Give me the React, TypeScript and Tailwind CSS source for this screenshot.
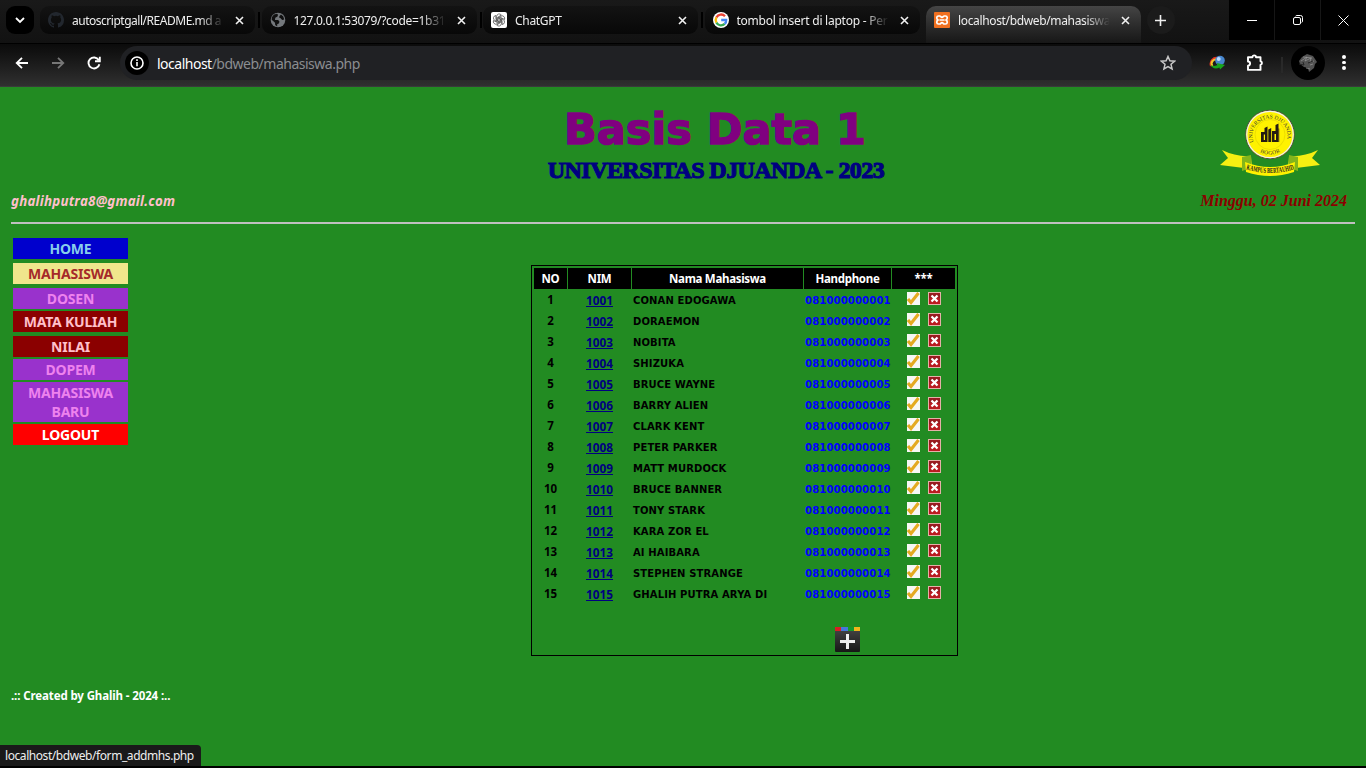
import React from "react";

const students = [
  "CONAN EDOGAWA", "DORAEMON", "NOBITA", "SHIZUKA", "BRUCE WAYNE", "BARRY ALIEN", "CLARK KENT", "PETER PARKER",
  "MATT MURDOCK", "BRUCE BANNER", "TONY STARK", "KARA ZOR EL", "AI HAIBARA", "STEPHEN STRANGE", "GHALIH PUTRA ARYA DI",
];

const menu = [
  { label: "HOME", cls: "bg-[#0000cd] text-[#87ceeb] h-[21px] mb-1" },
  { label: "MAHASISWA", cls: "bg-[#f0e68c] text-[#a52a2a] h-[21px] mb-1" },
  { label: "DOSEN", cls: "bg-[#9932cc] text-[#ee82ee] h-[21px] mb-0.5" },
  { label: "MATA KULIAH", cls: "bg-[#8b0000] text-[#ffc0cb] h-[21px] mb-1" },
  { label: "NILAI", cls: "bg-[#8b0000] text-[#ffc0cb] h-[21px] mb-0.5" },
  { label: "DOPEM", cls: "bg-[#9932cc] text-[#ee82ee] h-[21px] mb-0.5" },
  { label: "MAHASISWA BARU", cls: "bg-[#9932cc] text-[#ee82ee] h-[40px] mb-0.5" },
  { label: "LOGOUT", cls: "bg-[#ff0000] text-white h-[21px]" },
];

const GithubIcon = () => (
  <svg viewBox="0 0 16 16" className="size-4" fill="#22272e">
    <path d="M8 0C3.58 0 0 3.58 0 8c0 3.54 2.29 6.53 5.47 7.59.4.07.55-.17.55-.38 0-.19-.01-.82-.01-1.49-2.01.37-2.53-.49-2.69-.94-.09-.23-.48-.94-.82-1.13-.28-.15-.68-.52-.01-.53.63-.01 1.08.58 1.23.82.72 1.21 1.87.87 2.33.66.07-.52.28-.87.51-1.07-1.78-.2-3.64-.89-3.64-3.95 0-.87.31-1.59.82-2.15-.08-.2-.36-1.02.08-2.12 0 0 .67-.21 2.2.82a7.6 7.6 0 0 1 4 0c1.53-1.04 2.2-.82 2.2-.82.44 1.1.16 1.92.08 2.12.51.56.82 1.27.82 2.15 0 3.07-1.87 3.75-3.65 3.95.29.25.54.73.54 1.48 0 1.07-.01 1.93-.01 2.2 0 .21.15.46.55.38A8.01 8.01 0 0 0 16 8c0-4.42-3.58-8-8-8Z" />
  </svg>
);

const GlobeIcon = () => (
  <svg viewBox="0 0 16 16" className="size-4">
    <circle cx="8" cy="8" r="7.3" fill="#74787c" />
    <path d="M1.8 5.3 4 2.6 7 1.7l1 1.1-.5 1.7L5.3 5.7 5 8l3.2.1 1.3 1.7-.7 1.6-1.6.8v2.2L5.2 13 5 10.8 2.6 8.5 1.7 8ZM11 2.4l2.3 2.1.9 3-2 .5-1.6-1.8-1.5-.7.4-1.5Z" fill="#101010" />
  </svg>
);

const GptIcon = () => (
  <svg viewBox="0 0 16 16" className="size-4">
    <rect width="16" height="16" rx="2" fill="#fff" />
    <g fill="none" stroke="#444" strokeWidth=".7">
      {[0, 60, 120, 180, 240, 300].map((a) => (
        <path key={a} transform={`rotate(${a} 8 8)`} d="M5.600 9.100V4.500a2.600 2.600 0 0 1 4.700-1.500L6.800 5.200v4.100" />
      ))}
    </g>
  </svg>
);

const GoogleIcon = () => (
  <svg viewBox="0 0 16 16" className="size-4">
    <circle cx="8" cy="8" r="8" fill="#fff" />
    <g fill="none" strokeWidth="2.3">
      <path d="M12 4.2A5.3 5.3 0 0 0 3.4 5.4" stroke="#ea4335" />
      <path d="M3.4 5.4a5.3 5.3 0 0 0 0 5.2" stroke="#fbbc05" />
      <path d="M3.4 10.6a5.3 5.3 0 0 0 8.3 1.3" stroke="#34a853" />
      <path d="M11.7 11.9A5.1 5.1 0 0 0 13.2 8H8.2" stroke="#4285f4" />
    </g>
  </svg>
);

const XamppIcon = () => (
  <svg viewBox="0 0 16 16" className="size-4">
    <rect width="16" height="16" rx="1" fill="#f07020" />
    <path d="M4.5 4h1.2c1 0 1.2 1.4 2.3 1.4S9.3 4 10.300 4h1.200c2.200 0 2.200 3 .6 4 1.600 1 1.600 4-.6 4h-1.200c-1 0-1.200-1.400-2.300-1.400S6.700 12 5.700 12H4.500c-2.200 0-2.200-3-.6-4-1.600-1-1.600-4 .6-4ZM5.500 8h5" fill="none" stroke="#fff" strokeWidth="1.7" />
  </svg>
);

const tabs = [
  { title: "autoscriptgall/README.md a", Icon: GithubIcon, size: "tracking-[-0.480px]" },
  { title: "127.0.0.1:53079/?code=1b31", Icon: GlobeIcon, size: "tracking-[-0.320px]" },
  { title: "ChatGPT", Icon: GptIcon, size: "tracking-[-0.3px]" },
  { title: "tombol insert di laptop - Per", Icon: GoogleIcon, size: "tracking-[-0.240px]" },
  { title: "localhost/bdweb/mahasiswa", Icon: XamppIcon, size: "tracking-[-0.350px]", active: true },
];

const Cross = () => (
  <svg viewBox="0 0 9 9" className="size-[9px] shrink-0" stroke="#f1f1f1" strokeWidth="1.6"><path d="m1 1 7 7M8 1 1 8" /></svg>
);

const TabStrip = () => (
  <div className="flex h-[43px] bg-linear-to-b from-[#191919] to-[#121212]">
    <button className="ml-1.5 mt-1.5 flex size-7 items-center justify-center rounded-[9px] bg-black">
      <svg viewBox="0 0 10 7" className="h-[7px] w-[10px]" fill="none" stroke="#fff" strokeWidth="1.8"><path d="m1 1 4 4 4-4" /></svg>
    </button>
    <div className="ml-1.5 flex">
      {tabs.map(({ title, Icon, size, active }, i) => (
        <div key={title} className="flex w-[221.500px] items-start">
          <div className={"mt-1.5 flex w-[215px] items-center pl-2 " + (active ? "h-[37px] rounded-t-[10px] bg-linear-to-b from-[#454545] to-[#171717] pb-[9px]" : "h-7 rounded-[9px] bg-linear-to-b from-[#131313] to-[#080808]")}>
            <Icon />
            <span className={"ml-2 w-[155px] whitespace-nowrap pt-px text-[12px] text-[#eee] mask-r-from-[82%] mask-r-to-[98%] " + size}>{title}</span>
            <span className="ml-2 flex"><Cross /></span>
          </div>
          {i < 3 && <span className="ml-[3px] mt-3 h-4 w-[2px] bg-black" />}
        </div>
      ))}
    </div>
    <div className="-ml-px mt-1.5 flex size-7 items-center justify-center rounded-full bg-[#1b1b1b]">
      <svg viewBox="0 0 11 11" className="size-[11px]" stroke="#eee" strokeWidth="1.6"><path d="M5.500 0v11M0 5.500h11" /></svg>
    </div>
    <div className="ml-auto grid h-10 w-[137px] grid-cols-3 gap-px bg-[#161616]">
      <div className="flex items-center justify-center bg-black"><span className="h-px w-[10px] bg-white" /></div>
      <div className="flex items-center justify-center bg-black">
        <svg viewBox="0 0 10 10" className="size-[10px]" fill="none" stroke="#fff"><rect x=".5" y="2.500" width="7" height="7" rx="1.500" /><path d="M2.500 1.200Q3 .5 4 .5h3.500a2 2 0 0 1 2 2V6q0 1-.8 1.500" /></svg>
      </div>
      <div className="flex items-center justify-center bg-black">
        <svg viewBox="0 0 11 11" className="size-[11px]" stroke="#fff"><path d="m.5.5 10 10m0-10-10 10" /></svg>
      </div>
    </div>
  </div>
);

const Toolbar = () => (
  <div className="flex h-[44px] items-center border-b border-[#3a3a3a] border-t border-t-black bg-linear-to-b from-[#0b0b0b] to-[#303030]">
    <svg viewBox="0 0 14 12" className="ml-[15px] mb-[5px] h-3 w-[14px]" fill="none" stroke="#fff" strokeWidth="1.800"><path d="M13 6H1.500M7 .8 1.700 6 7 11.200" /></svg>
    <svg viewBox="0 0 14 12" className="ml-[22px] mb-[5px] h-3 w-[14px]" fill="none" stroke="#777" strokeWidth="1.800"><path d="M1 6h11.500M7 .8 12.300 6 7 11.200" /></svg>
    <svg viewBox="0 0 14 14" className="ml-[22px] mb-[5px] size-[14px]" fill="none" stroke="#fff" strokeWidth="1.900"><path d="M11.700 4A5.500 5.500 0 1 0 12.400 8.200M12.800.8v4.500H8" /></svg>
    <div className="ml-[19px] mb-1 flex h-[34px] w-[1072px] items-center rounded-full bg-[#202124] pl-[5px]">
      <span className="flex size-6 items-center justify-center rounded-full bg-black">
        <svg viewBox="0 0 14 14" className="size-[14px]" fill="none" stroke="#fff" strokeWidth="1.600"><circle cx="7" cy="7" r="6" /><path d="M7 6v4.300M7 3.300v1.600" /></svg>
      </span>
      <span className="ml-2 text-[14px] tracking-[-0.500px] text-[#8b8d90]"><span className="text-white">localhost</span>/bdweb/mahasiswa.php</span>
      <svg viewBox="0 0 16 16" className="ml-auto mr-[16px] size-4" fill="none" stroke="#c8c8c8" strokeWidth="1.500"><path d="m8 1.500 1.900 4.300 4.700.4-3.600 3.100 1.100 4.600L8 11.500l-4.100 2.400L5 9.300 1.400 6.200l4.700-.4Z" /></svg>
    </div>
    <svg viewBox="0 0 17 15" className="ml-[17px] mb-[5px] h-[15px] w-[17px]">
      <path d="M2 11A6 6 0 0 1 9 3" fill="none" stroke="#e33122" strokeWidth="2" />
      <path d="M3.500 11a4 4 0 0 1 5-6" fill="none" stroke="#f3c62a" strokeWidth="2" />
      <circle cx="11" cy="5.500" r="4.800" fill="#4787cf" /><circle cx="9.700" cy="4" r="2" fill="#b9dcff" />
      <path d="M1 8.500c1.500 3 4 3 7.500 1.500l-.5-2 8 2-5 4.500-.5-2C6.500 15 2.500 13 1 8.500Z" fill="#18a51d" />
    </svg>
    <svg viewBox="0 0 18 18" className="ml-5 mb-[5px] size-[18px]" fill="none" stroke="#fff" strokeWidth="1.900"><path d="M2 3.200h4.400a1.800 1.800 0 0 1 3.600 0h4.500v4a1.900 1.900 0 0 1 0 3.700v5H2v-4.200a2.100 2.100 0 0 0 0-4.200Z" strokeLinejoin="round" /></svg>
    <span className="ml-[17px] h-4 w-[2px] bg-[#292929]" />
    <span className="ml-[8px] mb-1 flex size-[34px] items-center justify-center rounded-full bg-black">
      <svg viewBox="0 0 20 20" className="size-5"><path d="m1 8 3-4 5-3 6 2 4 6-2 2-1 4-5 4-1-4-4-1-4-3Z" fill="#525252" /><path d="m3 8 6-4-2 4 6-3-1 4 4-1M5 4l9 1M8 15l4 1M12 12l3-1" stroke="#999" strokeWidth=".7" fill="none" /><path d="m1 11 5 1-1-3m5 1 5-2" stroke="#242424" fill="none" /></svg>
    </span>
    <span className="ml-[17px] mb-[5px] flex flex-col gap-[2px]">{[0, 1, 2].map((i) => <i key={i} className="size-[3.500px] rounded-full bg-white" />)}</span>
  </div>
);

const Emblem = () => (
  <svg viewBox="0 0 100 68" className="h-[68px] w-[100px]">
    <path d="M2 41q14 7 29 6l1 13-32-4 8-7ZM98 41q-14 7-29 6l-1 13 32-4-8-7Z" fill="#f6ef12" />
    <path d="M22 48l9-2v13l-9 3zM78 48l-9-2v13l9 3z" fill="#83b51b" />
    <path d="M25 53q25 10 50 0l-1 10q-24 8-48 0Z" fill="#fff200" />
    <circle cx="50" cy="25.500" r="24.300" fill="#fff200" stroke="#4b4b4b" />
    <circle cx="50" cy="25.500" r="23.200" fill="none" stroke="#eee" strokeWidth="1.200" />
    <circle cx="50" cy="25.500" r="15" fill="none" stroke="#d8c800" strokeWidth=".5" />
    <defs><path id="ringTop" d="M34 34A17.500 17.500 0 1 1 66 34" /><path id="ringBottom" d="M34 38A20.500 20.500 0 0 0 66 38" /><path id="ribbon" d="M25 60Q50 68 75 60" /></defs>
    <g fontFamily="Liberation Serif" fill="#333">
      <text fontSize="5.400"><textPath href="#ringTop" startOffset="1" textLength="64" lengthAdjust="spacingAndGlyphs">UNIVERSITAS DJUANDA</textPath></text>
      <text fontSize="5.600"><textPath href="#ringBottom" startOffset="8" textLength="21">BOGOR</textPath></text>
      <text fontSize="7.500" fontWeight="bold" fill="#222"><textPath href="#ribbon" startOffset="1" textLength="49" lengthAdjust="spacingAndGlyphs">KAMPUS BERTAUHID</textPath></text>
    </g>
    <path fillRule="evenodd" d="M41 23h3.500v-4l3-1.500V33H41ZM43.800 25.500h1.200V31h-1.200ZM52 22h3.500v-6l3-1.500V33H52ZM54.500 25H56v6h-1.500Z" fill="#241b12" />
    <path d="m48.300 20.500 2.900-1.500v14h-2.900ZM59.200 19.500l-.7 0V33h.7Z" fill="#241b12" />
  </svg>
);

const EditIcon = () => (
  <svg viewBox="0 0 13 13" className="size-[13px]"><path fill="#f7f7f4" d="M0 0h13v13H0z" /><path d="m1 7 3 3.500L11.500 1" fill="none" stroke="#e4aa21" strokeWidth="3.100" /></svg>
);
const DeleteIcon = () => (
  <svg viewBox="0 0 13 13" className="size-[13px]"><rect x=".5" y=".5" width="12" height="12" fill="#b91b20" stroke="#e4b1a8" /><path d="M1 1h11v5H1z" fill="#981b20" /><path d="m3.500 3.500 6 6m0-6-6 6" stroke="#fff" strokeWidth="2.300" /></svg>
);

const StudentTable = () => (
  <div className="w-[427px] h-[391px] border border-black p-[2px]">
    <div className="grid grid-cols-[33px_63px_171px_87px_63px] gap-px text-center text-[11.500px] font-bold leading-[22px] text-white tracking-[-0.300px]">
      {["NO", "NIM", "Nama Mahasiswa", "Handphone", "***"].map((h) => <div key={h} className="h-[21px] bg-black">{h}</div>)}
    </div>
    <div className="pt-px">
      {students.map((name, i) => (
        <div key={name} className="grid h-[21px] grid-cols-[33px_63px_171px_87px_63px] gap-px font-bold leading-[21px]">
          <span className="text-center text-[11.500px] leading-[20px]">{i + 1}</span>
          <span className="text-center text-[11.800px] leading-[20px] text-[#000080] underline">{1001 + i}</span>
          <span className="pl-px font-['DejaVu_Sans'] text-[10px] tracking-[0.120px]">{name}</span>
          <span className="whitespace-nowrap pl-px font-['DejaVu_Sans'] text-[10px] tracking-[0.180px] text-[#0000ff]">{"0810000000" + String(i + 1).padStart(2, "0")}</span>
          <span className="flex gap-2 pl-[15px] pt-[2px]"><EditIcon /><DeleteIcon /></span>
        </div>
      ))}
    </div>
    <div className="ml-[301px] mt-[22px]">
      <svg viewBox="0 0 25 25" className="size-[25px]">
        <defs><linearGradient id="dark" x2="0" y2="1"><stop stopColor="#484848" /><stop offset="1" stopColor="#161616" /></linearGradient></defs>
        <rect width="25" height="25" rx="1" fill="url(#dark)" /><path fill="#d91e24" d="M0 0h6v4H0z" /><path fill="#4477dd" d="M6 0h7v4H6z" /><path fill="#16982c" d="M13 0h6v4h-6z" /><path fill="#f3b51b" d="M19 0h6v4h-6z" />
        <path d="M12.500 7v15M5 14.500h15" stroke="#eee" strokeWidth="3" />
      </svg>
    </div>
  </div>
);

export default function App() {
  return (
    <div className="flex h-[768px] w-[1366px] flex-col overflow-hidden bg-black font-['Noto_Sans','Liberation_Sans',sans-serif]">
      <TabStrip />
      <Toolbar />
      <main className="relative flex h-[679px] flex-col bg-[#228b22] px-[11px] text-black">
        <header className="grid h-[135px] grid-cols-[164px_1fr_164px]">
          <div className="self-end whitespace-nowrap pb-[11px] text-[13.300px] font-bold italic leading-5 tracking-[0.240px] text-[#ffc0cb]">ghalihputra8@gmail.com</div>
          <div className="flex flex-col items-center pl-[66px]">
            <h1 className="mt-[17px] h-[50px] whitespace-nowrap pr-[2px] font-['DejaVu_Sans'] text-[43px] font-bold leading-[50px] text-[#800080] [-webkit-text-stroke:1.400px_#800080]">Basis Data 1</h1>
            <h2 className="h-[32px] whitespace-nowrap font-['Liberation_Serif'] text-[24px] font-bold leading-[32px] tracking-[-0.560px] text-[#000080] [-webkit-text-stroke:1.100px_#000080]">UNIVERSITAS DJUANDA - 2023</h2>
          </div>
          <div className="flex flex-col items-end pr-2 pt-[22px]">
            <div className="pr-[27px]"><Emblem /></div>
            <div className="mt-[14px] whitespace-nowrap font-['Liberation_Serif'] text-[16px] font-bold italic leading-5 text-[#8b0000]">Minggu, 02 Juni 2024</div>
          </div>
        </header>
        <div className="h-[2px] shrink-0 bg-[#c0c0c0]" />
        <div className="flex h-[446px]">
          <nav className="ml-[2px] mt-[14px] w-[115px] text-center text-[14px] font-bold leading-[19px] tracking-[-0.200px]">
            {menu.map((m) => <div key={m.label} className={"px-2 pt-px " + m.cls}>{m.label}</div>)}
          </nav>
          <div className="ml-[403px] mt-[41px]"><StudentTable /></div>
        </div>
        <footer className="mt-[17px] text-[11.500px] font-bold leading-[18px] tracking-[-0.120px] text-white">.:: Created by Ghalih - 2024 :..</footer>
        <div className="absolute bottom-0 left-0 flex h-[21px] w-[201px] items-center whitespace-nowrap rounded-tr bg-[#1a1a1a] pl-[5px] text-[12px] tracking-[-0.430px] text-[#eee]">localhost/bdweb/form_addmhs.php</div>
      </main>
    </div>
  );
}
